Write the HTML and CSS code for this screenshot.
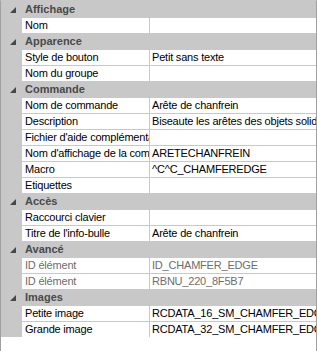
FILE: index.html
```
<!DOCTYPE html>
<html lang="fr">
<head>
    <meta charset="UTF-8">
    <title>Propriétés</title>
    <link rel="stylesheet" href="styles.css">
</head>
<body>
    <div class="grid">
        <div class="row cat"><span class="toggle"><svg width="6" height="6" viewBox="0 0 6 6"><polygon points="6,0 6,6 0,6"/></svg></span><span class="title">Affichage</span></div>
        <div class="row"><span class="gutter"></span><span class="name">Nom</span><span class="value"></span></div>

        <div class="row cat"><span class="toggle"><svg width="6" height="6" viewBox="0 0 6 6"><polygon points="6,0 6,6 0,6"/></svg></span><span class="title">Apparence</span></div>
        <div class="row"><span class="gutter"></span><span class="name">Style de bouton</span><span class="value">Petit sans texte</span></div>
        <div class="row"><span class="gutter"></span><span class="name">Nom du groupe</span><span class="value"></span></div>

        <div class="row cat"><span class="toggle"><svg width="6" height="6" viewBox="0 0 6 6"><polygon points="6,0 6,6 0,6"/></svg></span><span class="title">Commande</span></div>
        <div class="row"><span class="gutter"></span><span class="name">Nom de commande</span><span class="value">Arête de chanfrein</span></div>
        <div class="row"><span class="gutter"></span><span class="name">Description</span><span class="value">Biseaute les arêtes des objets solides 3D</span></div>
        <div class="row"><span class="gutter"></span><span class="name">Fichier d'aide complémentaire</span><span class="value"></span></div>
        <div class="row"><span class="gutter"></span><span class="name">Nom d'affichage de la commande</span><span class="value">ARETECHANFREIN</span></div>
        <div class="row"><span class="gutter"></span><span class="name">Macro</span><span class="value">^C^C_CHAMFEREDGE</span></div>
        <div class="row"><span class="gutter"></span><span class="name">Etiquettes</span><span class="value"></span></div>

        <div class="row cat"><span class="toggle"><svg width="6" height="6" viewBox="0 0 6 6"><polygon points="6,0 6,6 0,6"/></svg></span><span class="title">Accès</span></div>
        <div class="row"><span class="gutter"></span><span class="name">Raccourci clavier</span><span class="value"></span></div>
        <div class="row"><span class="gutter"></span><span class="name">Titre de l'info-bulle</span><span class="value">Arête de chanfrein</span></div>

        <div class="row cat"><span class="toggle"><svg width="6" height="6" viewBox="0 0 6 6"><polygon points="6,0 6,6 0,6"/></svg></span><span class="title">Avancé</span></div>
        <div class="row disabled"><span class="gutter"></span><span class="name">ID élément</span><span class="value">ID_CHAMFER_EDGE</span></div>
        <div class="row disabled"><span class="gutter"></span><span class="name">ID élément</span><span class="value">RBNU_220_8F5B7</span></div>

        <div class="row cat"><span class="toggle"><svg width="6" height="6" viewBox="0 0 6 6"><polygon points="6,0 6,6 0,6"/></svg></span><span class="title">Images</span></div>
        <div class="row"><span class="gutter"></span><span class="name">Petite image</span><span class="value">RCDATA_16_SM_CHAMFER_EDGE</span></div>
        <div class="row"><span class="gutter"></span><span class="name">Grande image</span><span class="value">RCDATA_32_SM_CHAMFER_EDGE</span></div>
    </div>
</body>
</html>
```

FILE: styles.css
```
* {
    margin: 0;
    padding: 0;
    box-sizing: border-box;
}

body {
    font-family: "Liberation Sans", Arial, sans-serif;
    font-size: 11px;
    background: white;
}

.grid {
    width: 317px;
    height: 351px;
    border: 1px solid #a0a0a0;
    border-top-color: #c8c8c8;
    border-bottom: none;
    background: white;
    overflow: hidden;
}

.row {
    display: flex;
    height: 16px;
    border-top: 1px solid #c8c8c8;
    line-height: 15px;
    white-space: nowrap;
}

.gutter {
    flex: 0 0 21px;
    background: #c8c8c8;
}

.name {
    flex: 0 0 128px;
    padding-left: 3px;
    border-right: 1px solid #c8c8c8;
    overflow: hidden;
    color: #000;
    letter-spacing: -0.2px;
}

.value {
    flex: 1;
    padding-left: 2px;
    overflow: hidden;
    color: #000;
    letter-spacing: -0.2px;
}

.disabled .name,
.disabled .value {
    color: #6d6d6d;
}

.cat {
    background: #c8c8c8;
}

.toggle {
    flex: 0 0 24px;
    display: flex;
    align-items: center;
    padding-left: 9px;
}

.toggle svg {
    fill: #474747;
}

.title {
    font-weight: bold;
    color: #4a4a4a;
}
```
